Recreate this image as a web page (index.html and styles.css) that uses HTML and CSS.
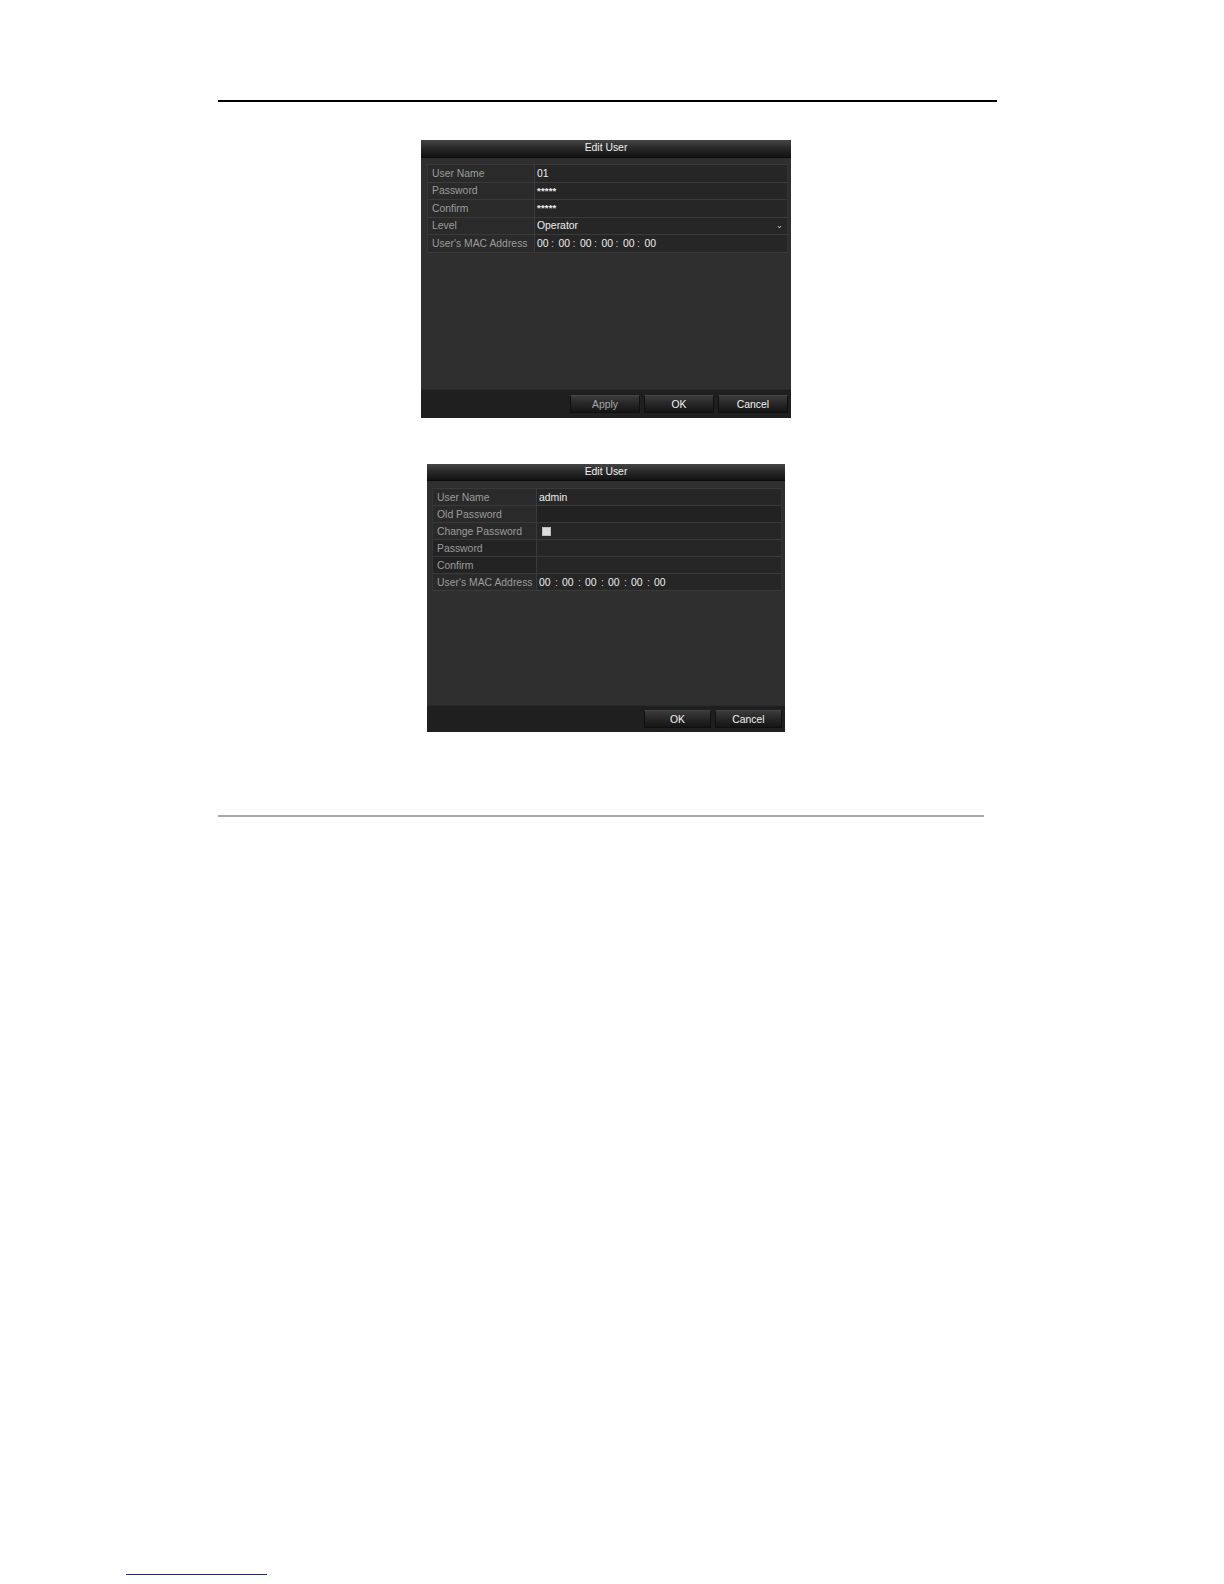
FILE: index.html
```html
<!DOCTYPE html>
<html>
<head>
<meta charset="utf-8">
<title>Edit User</title>
<link rel="stylesheet" href="styles.css">
</head>
<body>
<div class="page">
  <div class="rule-top"></div>

  <div class="dlg d1">
    <div class="dlg-title">Edit User</div>
    <div class="dlg-body">
      <div class="grid">
        <div class="lbl">User Name</div><div class="val">01</div>
        <div class="lbl">Password</div><div class="val stars">*****</div>
        <div class="lbl">Confirm</div><div class="val stars">*****</div>
        <div class="lbl">Level</div><div class="val sel"><span>Operator</span><span class="arrow">&#8964;</span></div>
        <div class="lbl">User's MAC Address</div>
        <div class="val mac"><span>00</span><span>:</span><span>00</span><span>:</span><span>00</span><span>:</span><span>00</span><span>:</span><span>00</span><span>:</span><span>00</span></div>
      </div>
    </div>
    <div class="dlg-foot">
      <div class="btn dim">Apply</div>
      <div class="btn">OK</div>
      <div class="btn">Cancel</div>
    </div>
  </div>

  <div class="dlg d2">
    <div class="dlg-title">Edit User</div>
    <div class="dlg-body">
      <div class="grid">
        <div class="lbl">User Name</div><div class="val">admin</div>
        <div class="lbl">Old Password</div><div class="val dark"></div>
        <div class="lbl">Change Password</div><div class="val"><span class="chk"></span></div>
        <div class="lbl dark">Password</div><div class="val"></div>
        <div class="lbl dark">Confirm</div><div class="val"></div>
        <div class="lbl">User's MAC Address</div>
        <div class="val mac"><span>00</span><span>:</span><span>00</span><span>:</span><span>00</span><span>:</span><span>00</span><span>:</span><span>00</span><span>:</span><span>00</span></div>
      </div>
    </div>
    <div class="dlg-foot">
      <div class="btn">OK</div>
      <div class="btn">Cancel</div>
    </div>
  </div>

  <div class="rule-bottom"></div>
  <div class="link-line"></div>
</div>
</body>
</html>
```

FILE: styles.css
```css
html, body {
  margin: 0;
  padding: 0;
  background: #ffffff;
}
.page {
  width: 1224px;
  height: 1584px;
  display: flex;
  flex-direction: column;
  font-family: "Liberation Sans", Arial, sans-serif;
}
.rule-top {
  margin: 100px 0 0 218px;
  width: 779px;
  height: 2px;
  background: #000;
}
.dlg {
  display: flex;
  flex-direction: column;
  background: #2f2f2f;
  color: #e6e6e6;
  font-size: 10.4px;
}
.d1 {
  margin: 38px 0 0 421px;
  width: 370px;
  height: 278px;
}
.d2 {
  margin: 46px 0 0 427px;
  width: 358px;
  height: 268px;
}
.dlg-title {
  text-align: center;
  color: #f0f0f0;
  background: linear-gradient(#454545, #2a2a2a 45%, #121212);
  border-bottom: 1px solid #0c0c0c;
}
.d1 .dlg-title { height: 17px; line-height: 16px; }
.d2 .dlg-title { height: 16px; line-height: 15px; }
.dlg-body {
  flex: 1;
}
.d1 .dlg-body { padding: 6px 3px 0 6px; }
.d2 .dlg-body { padding: 7px 3px 0 5px; }
.grid {
  display: grid;
  border-top: 1px solid #3a3a3a;
}
.d1 .grid { grid-template-columns: 108px 1fr; grid-auto-rows: 17.5px; }
.d2 .grid { grid-template-columns: 105px 1fr; grid-auto-rows: 17px; }
.lbl, .val {
  box-sizing: border-box;
  border-bottom: 1px solid #3a3a3a;
  display: flex;
  align-items: center;
  white-space: nowrap;
}
.lbl {
  background: #2a2a2a;
  color: #9c9c9c;
  padding-left: 4px;
  border-left: 1px solid #353535;
  border-right: 1px solid #3a3a3a;
}
.val {
  background: #262626;
  color: #ededed;
  padding-left: 2px;
  border-right: 1px solid #333;
}
.lbl.dark { background: #232323; }
.val.dark { background: #222222; }
.stars {
  font-size: 9.5px;
  font-weight: bold;
  letter-spacing: 0.2px;
  align-items: flex-start;
  padding-top: 2px;
}
.sel {
  justify-content: space-between;
}
.arrow {
  font-size: 8px;
  color: #cfcfcf;
  padding-right: 4px;
  line-height: 6px;
}
.mac span:nth-child(odd) { width: 14px; }
.mac span:nth-child(even) { width: 7.5px; color: #cfcfcf; }
.d2 .mac span:nth-child(odd) { width: 16px; }
.d2 .mac span:nth-child(even) { width: 7px; }
.chk {
  width: 9px;
  height: 9px;
  margin-left: 3px;
  background: #dcdcdc;
  border: 1px solid #bdbdbd;
  box-sizing: border-box;
}
.dlg-foot {
  display: flex;
  justify-content: flex-end;
  align-items: center;
  gap: 4px;
  padding-right: 3px;
  background: #1f1f1f;
  border-top: 1px solid #2a2a2a;
}
.d1 .dlg-foot { height: 28px; }
.d2 .dlg-foot { height: 26px; }
.btn {
  box-sizing: border-box;
  height: 18px;
  line-height: 17px;
  text-align: center;
  color: #f2f2f2;
  background: linear-gradient(#3b3b3b, #262626 50%, #151515);
  border: 1px solid #101010;
  border-top-color: #444;
}
.d1 .btn { width: 70px; }
.d2 .btn { width: 67px; }
.btn.dim { color: #a6a6a6; }
.rule-bottom {
  margin: 83px 0 0 218px;
  width: 766px;
  height: 2px;
  background: #a8a8a8;
}
.link-line {
  margin: 757px 0 0 126px;
  width: 141px;
  height: 1px;
  background: #1a2a8a;
}
```
